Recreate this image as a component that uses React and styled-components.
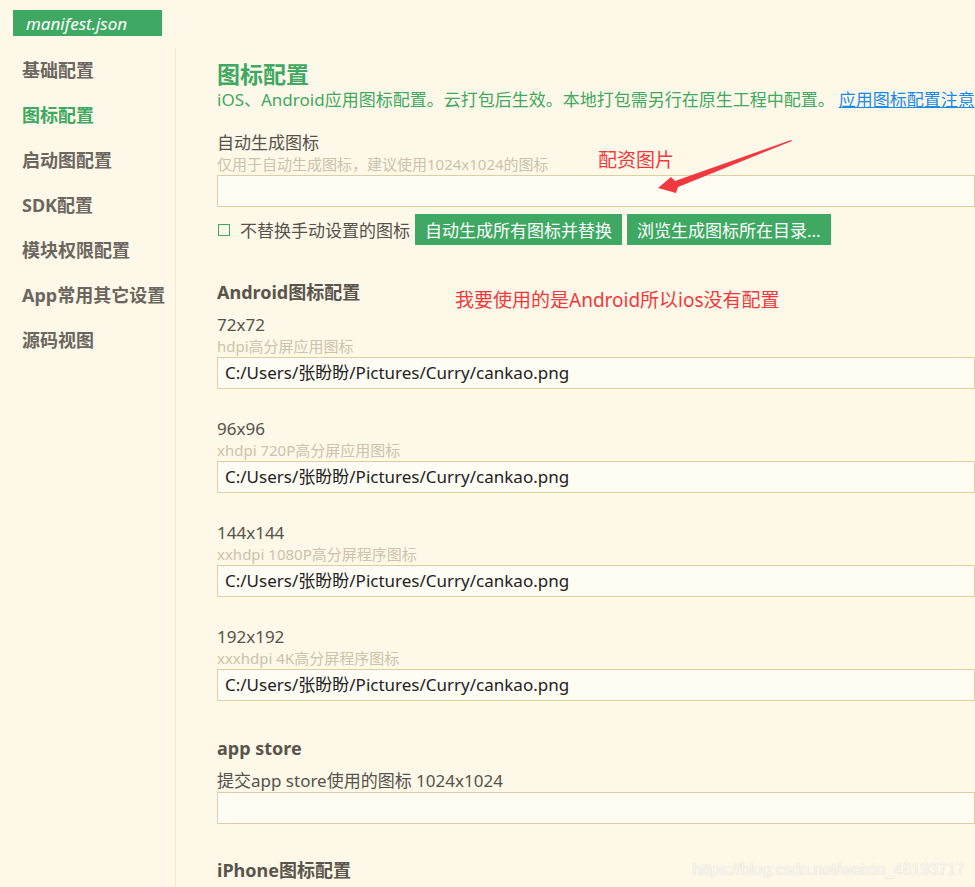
import React from "react";
import styled, { createGlobalStyle } from "styled-components";

const Global = createGlobalStyle`
  html, body { margin: 0; padding: 0; background: #fdf8e7; }
  body { width: 975px; height: 887px; overflow: hidden; font-family: "Noto Sans", "Noto Sans CJK SC", sans-serif; }
  #root { height: 887px; }
`;

const Page = styled.div`
  position: relative;
  width: 975px;
  height: 887px;
  overflow: hidden;
  background: #fdf8e7;
  display: flex;
  flex-direction: column;
`;

const TabBar = styled.div`
  padding: 10px 0 0 13px;
  height: 38px;
  box-sizing: border-box;
`;

const Tab = styled.div`
  display: inline-flex;
  align-items: center;
  width: 149px;
  height: 26px;
  box-sizing: border-box;
  padding-left: 13px;
  background: #3fa863;
  color: #fff;
  font-style: italic;
  font-size: 17px;
`;

const Body = styled.div`
  flex: 1;
  display: flex;
  min-height: 0;
`;

const Sidebar = styled.nav`
  width: 176px;
  flex: none;
  box-sizing: border-box;
  border-right: 1px solid #f3e9cf;
  margin-top: 10px;
`;

const NavItem = styled.div`
  height: 45px;
  line-height: 45px;
  padding-left: 22px;
  font-size: 18px;
  font-weight: 700;
  color: ${(p) => (p.$active ? "#3fa863" : "#6b6660")};
`;

const Main = styled.main`
  flex: 1;
  min-width: 0;
  padding: 22px 0 0 41px;
  overflow: hidden;
`;

const Title = styled.div`
  font-size: 23px;
  font-weight: 700;
  line-height: 29px;
  color: #3fa863;
`;

const Desc = styled.div`
  font-size: 17px;
  line-height: 22px;
  color: #3fa863;
  white-space: nowrap;
`;

const Link = styled.a`
  margin-left: 4px;
  color: #1a8ae5;
  text-decoration: underline;
`;

const Label = styled.div`
  font-size: 17px;
  line-height: 22px;
  color: #55524c;
  margin-top: ${(p) => p.$mt || 0}px;
  white-space: nowrap;
`;

const Hint = styled.div`
  font-size: 15px;
  line-height: 18px;
  color: #cbc3ad;
  margin-top: 1px;
  white-space: nowrap;
`;

const Input = styled.div`
  width: 758px;
  height: 32px;
  box-sizing: border-box;
  margin-top: ${(p) => (p.$mt === undefined ? 2 : p.$mt)}px;
  border: 1px solid #dccfa6;
  background: #fffcf4;
  padding-left: 7px;
  font-size: 17px;
  line-height: 30px;
  color: #222;
  white-space: nowrap;
`;

const CheckRow = styled.div`
  display: flex;
  align-items: center;
  margin-top: 7px;
  height: 31px;
`;

const Checkbox = styled.span`
  width: 12px;
  height: 12px;
  margin: 0 10px 0 1px;
  box-sizing: border-box;
  border: 1.5px solid #3fa863;
  flex: none;
`;

const CheckText = styled.span`
  font-size: 17px;
  color: #55524c;
  margin-right: 5px;
  white-space: nowrap;
`;

const Button = styled.button`
  height: 31px;
  border: none;
  background: #3fa863;
  color: #fff;
  font-family: inherit;
  font-size: 17px;
  padding: 0 10px;
  margin-right: 5px;
  white-space: nowrap;
  cursor: pointer;
`;

const Heading = styled.div`
  font-size: 18px;
  font-weight: 700;
  line-height: 24px;
  color: #5a554c;
  margin-top: ${(p) => p.$mt}px;
`;

const Block = styled.div`
  margin-top: ${(p) => p.$mt}px;
`;

const Note = styled.div`
  position: absolute;
  left: ${(p) => p.$x}px;
  top: ${(p) => p.$y}px;
  color: #f2383f;
  font-size: 19px;
  line-height: 24px;
  white-space: nowrap;
`;

const Arrow = styled.svg`
  position: absolute;
  left: 650px;
  top: 135px;
`;

const Watermark = styled.div`
  position: absolute;
  right: 10px;
  bottom: 8px;
  font-family: "Liberation Sans", Arial, sans-serif;
  font-size: 16px;
  color: rgba(255, 255, 255, 0.85);
  text-shadow: 0 0 1px rgba(120, 110, 90, 0.35);
`;

const NAV = ["基础配置", "图标配置", "启动图配置", "SDK配置", "模块权限配置", "App常用其它设置", "源码视图"];
const PATH = "C:/Users/张盼盼/Pictures/Curry/cankao.png";
const SIZES = [
  ["72x72", "hdpi高分屏应用图标"],
  ["96x96", "xhdpi 720P高分屏应用图标"],
  ["144x144", "xxhdpi 1080P高分屏程序图标"],
  ["192x192", "xxxhdpi 4K高分屏程序图标"],
];

export default function App() {
  return (
    <Page>
      <Global />
      <TabBar>
        <Tab>manifest.json</Tab>
      </TabBar>
      <Body>
        <Sidebar>
          {NAV.map((n, i) => (
            <NavItem key={n} $active={i === 1}>{n}</NavItem>
          ))}
        </Sidebar>
        <Main>
          <Title>图标配置</Title>
          <Desc>
            iOS、Android应用图标配置。云打包后生效。本地打包需另行在原生工程中配置。<Link>应用图标配置注意</Link>
          </Desc>
          <Label $mt={21}>自动生成图标</Label>
          <Hint>仅用于自动生成图标，建议使用1024x1024的图标</Hint>
          <Input />
          <CheckRow>
            <Checkbox />
            <CheckText>不替换手动设置的图标</CheckText>
            <Button>自动生成所有图标并替换</Button>
            <Button>浏览生成图标所在目录...</Button>
          </CheckRow>
          <Heading $mt={35}>Android图标配置</Heading>
          {SIZES.map(([s, h], i) => (
            <Block key={s} $mt={i === 0 ? 10 : 29}>
              <Label>{s}</Label>
              <Hint>{h}</Hint>
              <Input>{PATH}</Input>
            </Block>
          ))}
          <Heading $mt={35}>app store</Heading>
          <Label $mt={10}>提交app store使用的图标 1024x1024</Label>
          <Input $mt={0} />
          <Heading $mt={34}>iPhone图标配置</Heading>
        </Main>
      </Body>
      <Note $x={598} $y={148}>配资图片</Note>
      <Arrow width="150" height="65" viewBox="0 0 150 65">
        <polygon points="8,53 21,42 25,46 141,5 142,6 28,52 26,58" fill="#f2383f" />
      </Arrow>
      <Note $x={455} $y={288}>我要使用的是Android所以ios没有配置</Note>
      <Watermark>https://blog.csdn.net/weixin_48193717</Watermark>
    </Page>
  );
}
